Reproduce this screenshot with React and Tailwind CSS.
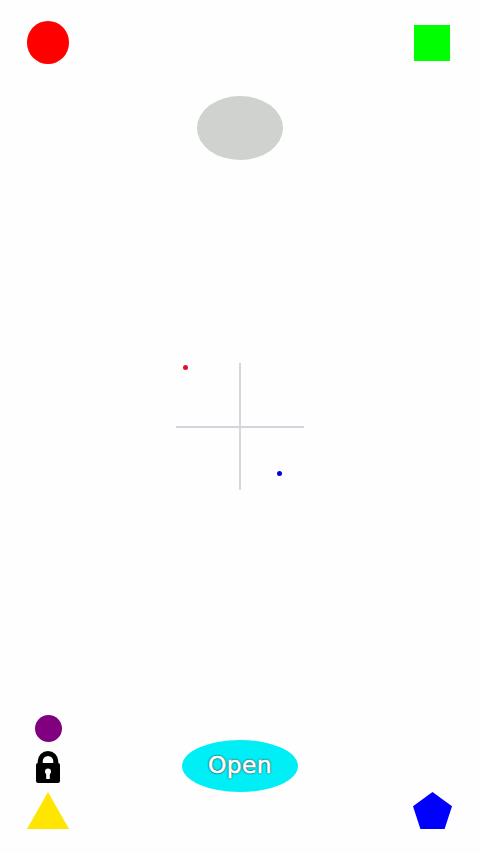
import React from "react";

const LockIcon = () => (
  <svg width="24" height="32" viewBox="0 0 24 32">
    <path d="M4.2 15V10.3a7.8 7.8 0 0 1 15.6 0V15" fill="none" stroke="#000" strokeWidth="5" />
    <rect x="0" y="12" width="24" height="20" rx="2" fill="#000" />
    <circle cx="12" cy="20.5" r="3" fill="#fff" />
    <rect x="10.2" y="20.5" width="3.6" height="7.5" fill="#fff" />
  </svg>
);

const Crosshair = () => (
  <div className="relative self-center w-[128px] h-[127px]">
    <div className="absolute left-[63px] top-0 w-[2px] h-full bg-[#d8d8dc]" />
    <div className="absolute left-0 top-[63px] w-full h-[1.5px] bg-[#d4d4dc]" />
    <div className="absolute left-[6.5px] top-[1.5px] w-[5px] h-[5px] rounded-full bg-[#e0102a]" />
    <div className="absolute left-[101px] top-[108px] w-[4.5px] h-[4.5px] rounded-full bg-[#0000e0]" />
  </div>
);

export default function App() {
  return (
    <div className="flex flex-col h-[853px] w-[480px] bg-[#fefefe] font-['DejaVu_Sans',sans-serif]">
      <div className="flex items-center justify-between h-[64px] pt-[21px] pl-[26.5px] pr-[30px]">
        <div className="w-[42.5px] h-[42.5px] rounded-full bg-[#ff0000]" />
        <div className="w-[36px] h-[36px] bg-[#00ff00]" />
      </div>

      <div className="self-center mt-[32px] w-[86px] h-[64px] rounded-[50%] bg-[#d0d2d0]" />

      <div className="flex flex-col mt-[203px]">
        <Crosshair />
      </div>

      <div className="flex items-end justify-between mt-auto pb-[24px] pl-[27px] pr-[28px]">
        <div className="flex flex-col items-center gap-[9px] w-[42px]">
          <div className="w-[27px] h-[27px] rounded-full bg-[#800080]" />
          <LockIcon />
          <svg width="42" height="37" viewBox="0 0 42 37">
            <polygon points="21,0 42,37 0,37" fill="#ffe600" />
          </svg>
        </div>

        <button className="mb-[37px] mr-[2px] w-[116px] h-[52px] rounded-[50%] bg-[#00eef6] text-white text-[23.5px] tracking-[0.3px] [-webkit-text-stroke:0.5px_white] [text-shadow:0_0_2px_#333,0_0_2px_#333]">
          Open
        </button>

        <svg width="39" height="37" viewBox="0 0 39 37">
          <polygon points="19.5,0 39,14.2 31.6,37 7.4,37 0,14.2" fill="#0000ff" />
        </svg>
      </div>
    </div>
  );
}
